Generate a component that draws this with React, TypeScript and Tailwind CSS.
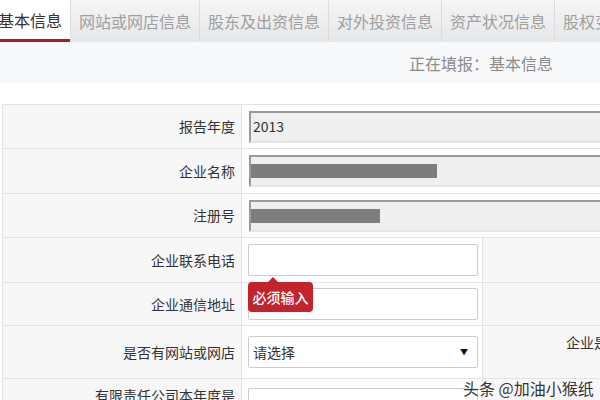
import React from 'react';

const tabs = ['基本信息', '网站或网店信息', '股东及出资信息', '对外投资信息', '资产状况信息', '股权变更信息'];

const font = { fontFamily: '"Noto Sans CJK SC", "Noto Sans", sans-serif' };

function Label({ children, top = false }: { children?: React.ReactNode; top?: boolean }) {
  return (
    <div
      className={`bg-[#f7f7f7] border-r border-[#e3e3e3] flex justify-end pr-[6px] text-[14px] text-[#333] ${
        top ? 'items-start pt-[6px]' : 'items-center'
      }`}
    >
      {children}
    </div>
  );
}

function ReadonlyInput({ value, mask }: { value?: string; mask?: number }) {
  return (
    <div className="flex items-center pl-[7px] pr-0">
      <div className="w-[420px] h-[32px] bg-[#efefef] border-2 border-t-[#9a9a9a] border-l-[#9a9a9a] border-b-[#e6e6e6] border-r-[#e6e6e6] flex items-center pl-[2px] text-[14px] text-[#333]">
        {value}
        {mask ? <div className="h-[14px] bg-[#7d7d7d] ml-[-2px]" style={{ width: mask }} /> : null}
      </div>
    </div>
  );
}

function TextInput() {
  return <div className="w-[230px] h-[32px] bg-white border border-[#cccccc] rounded-[2px]" />;
}

export default function App() {
  return (
    <div className="w-[600px] h-[400px] overflow-hidden bg-white relative" style={font}>
      {/* Tabs */}
      <div className="h-[42px] flex bg-gradient-to-b from-[#f5f5f5] to-[#e5e7e9] ml-[-10px] w-[700px]">
        {tabs.map((t, i) => (
          <div
            key={t}
            className={`h-full flex items-center px-[8px] text-[16px] whitespace-nowrap ${
              i === 0
                ? 'bg-white text-[#333] border-b-[3px] border-[#b3191e]'
                : 'text-[#a0a0a0] border-l border-[#dcdcdc]'
            }`}
          >
            {t}
          </div>
        ))}
      </div>

      {/* Status strip */}
      <div className="h-[41px] bg-[#f7f8fa] flex items-center justify-end pr-[47px] text-[16px] text-[#8c8c8c]">
        正在填报：基本信息
      </div>

      {/* Form table */}
      <div className="mt-[21px] ml-[2px] border-t border-l border-[#e3e3e3] w-[700px]">
        <div className="grid grid-cols-[239px_1fr] h-[44px] border-b border-[#e3e3e3]">
          <Label>报告年度</Label>
          <ReadonlyInput value="2013" />
        </div>
        <div className="grid grid-cols-[239px_1fr] h-[45px] border-b border-[#e3e3e3]">
          <Label>企业名称</Label>
          <ReadonlyInput mask={186} />
        </div>
        <div className="grid grid-cols-[239px_1fr] h-[44px] border-b border-[#e3e3e3]">
          <Label>注册号</Label>
          <ReadonlyInput mask={129} />
        </div>
        <div className="grid grid-cols-[239px_241px_1fr] h-[45px] border-b border-[#e3e3e3]">
          <Label>企业联系电话</Label>
          <div className="flex items-center pl-[6px] border-r border-[#e3e3e3]">
            <TextInput />
          </div>
          <div className="bg-[#f7f7f7]" />
        </div>
        <div className="grid grid-cols-[239px_241px_1fr] h-[43px] border-b border-[#e3e3e3]">
          <Label>企业通信地址</Label>
          <div className="relative flex items-center pl-[6px] border-r border-[#e3e3e3]">
            <TextInput />
            <div className="absolute left-[6px] top-[-1px] w-[65px] h-[30px] bg-[#c3232a] rounded-[4px] flex items-center justify-center text-white text-[14px] font-medium">
              必须输入
              <div className="absolute left-[20px] top-[-5px] w-0 h-0 border-l-[5px] border-r-[5px] border-b-[5px] border-l-transparent border-r-transparent border-b-[#c3232a]" />
            </div>
          </div>
          <div className="bg-[#f7f7f7]" />
        </div>
        <div className="grid grid-cols-[239px_241px_1fr] h-[53px] border-b border-[#e3e3e3]">
          <Label>是否有网站或网店</Label>
          <div className="flex items-center pl-[6px] border-r border-[#e3e3e3]">
            <div className="w-[230px] h-[32px] bg-white border border-[#cccccc] rounded-[2px] flex items-center justify-between pl-[4px] pr-[9px] text-[14px] text-[#333]">
              <span>请选择</span>
              <span className="text-[8px] text-[#111]">▼</span>
            </div>
          </div>
          <div className="bg-[#f7f7f7] flex items-start pt-[6px] pl-[83px] text-[14px] text-[#333] whitespace-nowrap">
            企业是否有投资信息或购买其他公司股权
          </div>
        </div>
        <div className="grid grid-cols-[239px_241px_1fr] h-[60px] border-b border-[#e3e3e3]">
          <Label top>有限责任公司本年度是</Label>
          <div className="flex items-start pt-[9px] pl-[6px] border-r border-[#e3e3e3]">
            <TextInput />
          </div>
          <div className="bg-[#f7f7f7]" />
        </div>
      </div>

      {/* Watermark */}
      <div
        className="absolute left-[463px] top-[376px] text-[16px] text-[#333] whitespace-nowrap"
        style={{ textShadow: '0 0 2px #fff, 0 0 2px #fff' }}
      >
        头条 @加油小猴纸
      </div>
    </div>
  );
}
